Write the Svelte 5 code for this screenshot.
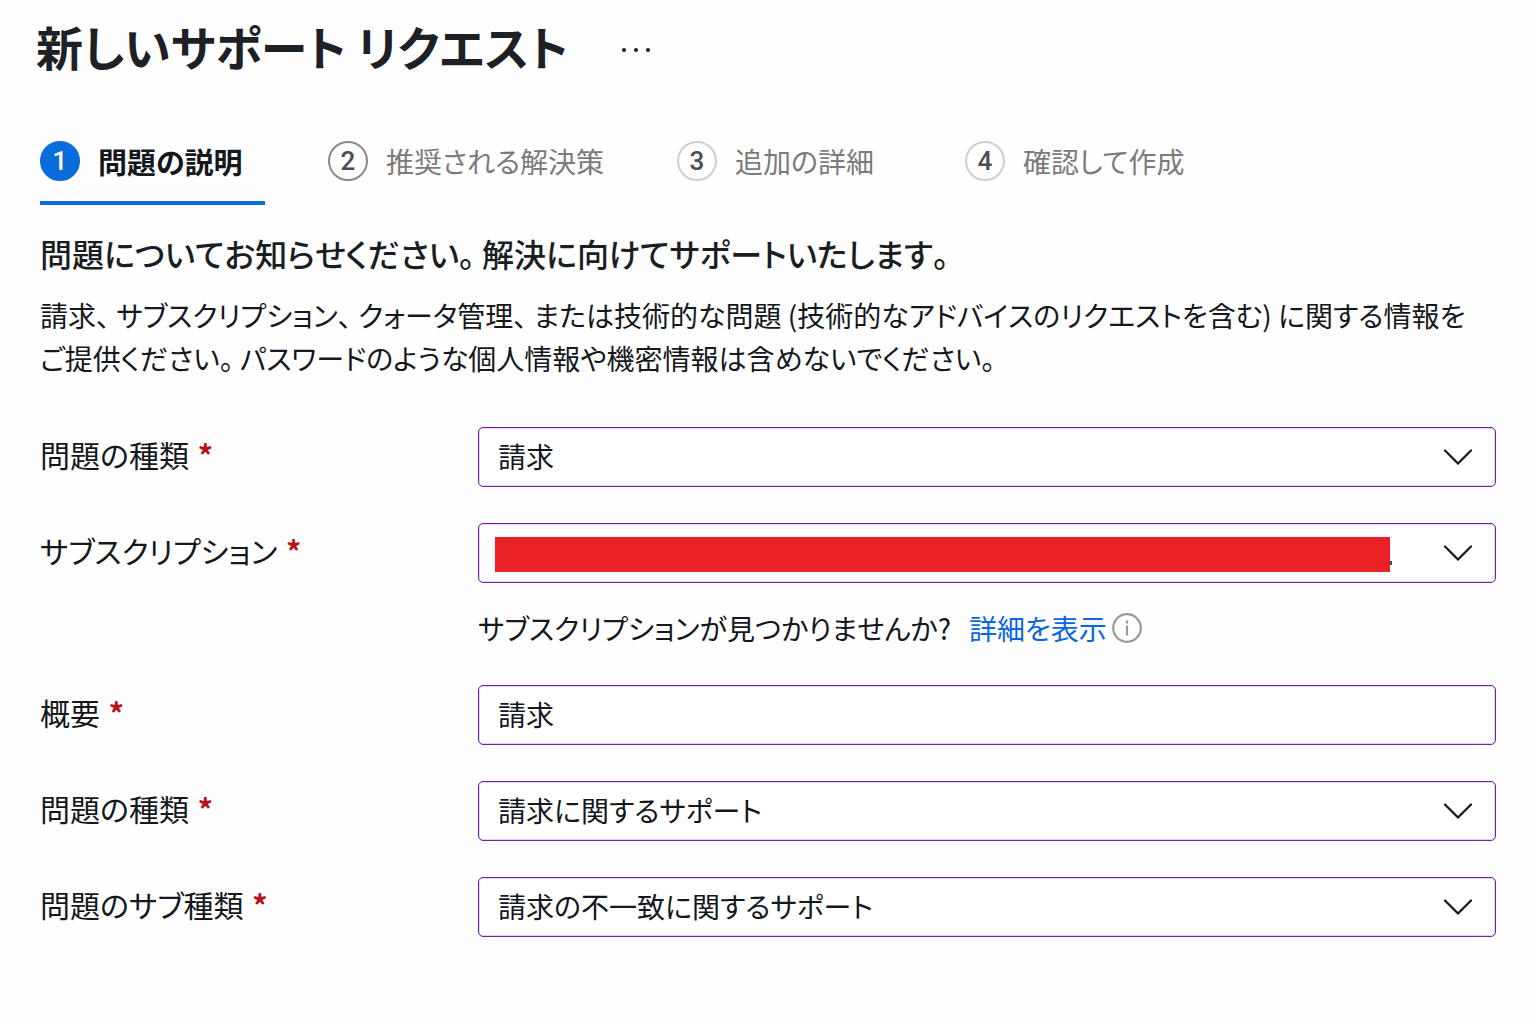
<script>
    let steps = [
        { number: 1, title: "問題の説明" },
        { number: 2, title: "推奨される解決策" },
        { number: 3, title: "追加の詳細" },
        { number: 4, title: "確認して作成" },
    ];

    let currentStep = $state(1);

    let issueType = $state("請求");
    let subscription = $state("");
    let summary = $state("請求");
    let problemType = $state("請求に関するサポート");
    let problemSubtype = $state("請求の不一致に関するサポート");
</script>

{#snippet chevron()}
    <svg class="chevron" viewBox="0 0 28 16" aria-hidden="true">
        <path d="M1 1.5 14 14.5 27 1.5" />
    </svg>
{/snippet}

<main>
    <header>
        <h1>新しいサポート リクエスト</h1>
        <button class="more" aria-label="その他">
            <svg viewBox="0 0 28 4" aria-hidden="true">
                <circle cx="2" cy="2" r="2" />
                <circle cx="14" cy="2" r="2" />
                <circle cx="26" cy="2" r="2" />
            </svg>
        </button>
    </header>

    <nav>
        {#each steps as step}
            <button
                class="step step-{step.number}"
                class:active={currentStep === step.number}
                onclick={() => (currentStep = step.number)}
            >
                <span class="number">{step.number}</span>
                <span>{step.title}</span>
            </button>
        {/each}
    </nav>

    <h2>問題についてお知らせください。 解決に向けてサポートいたします。</h2>
    <p class="intro">
        請求、 サブスクリプション、 クォータ管理、 または技術的な問題 (技術的なアドバイスのリクエストを含む) に関する情報をご提供ください。 パスワードのような個人情報や機密情報は含めないでください。
    </p>

    <form>
        <div class="row">
            <label for="issue-type">問題の種類 <span class="required">*</span></label>
            <div class="field">
                <select id="issue-type" bind:value={issueType}>
                    <option>請求</option>
                </select>
                {@render chevron()}
            </div>
        </div>

        <div class="row">
            <label for="subscription">サブスクリプション <span class="required">*</span></label>
            <div class="field">
                <select id="subscription" bind:value={subscription}>
                    <option value=""></option>
                </select>
                <div class="redacted"></div>
                {@render chevron()}
            </div>
            <p class="hint">
                <span>サブスクリプションが見つかりませんか?</span>
                <a href="#subscription">詳細を表示</a>
                <svg class="info" viewBox="0 0 30 30" aria-hidden="true">
                    <circle cx="15" cy="15" r="13.8" />
                    <path d="M15 12.5v10" />
                    <path d="M15 7.5v3" />
                </svg>
            </p>
        </div>

        <div class="row">
            <label for="summary">概要 <span class="required">*</span></label>
            <div class="field">
                <input id="summary" type="text" bind:value={summary} />
            </div>
        </div>

        <div class="row">
            <label for="problem-type">問題の種類 <span class="required">*</span></label>
            <div class="field">
                <select id="problem-type" bind:value={problemType}>
                    <option>請求に関するサポート</option>
                </select>
                {@render chevron()}
            </div>
        </div>

        <div class="row">
            <label for="problem-subtype">問題のサブ種類 <span class="required">*</span></label>
            <div class="field">
                <select id="problem-subtype" bind:value={problemSubtype}>
                    <option>請求の不一致に関するサポート</option>
                </select>
                {@render chevron()}
            </div>
        </div>
    </form>
</main>

<style>
    :global(body) {
        margin: 0;
        background: #fefefe;
    }

    main {
        padding: 12px 40px 40px;
        color: #14171c;
        font-family: "Noto Sans CJK JP", sans-serif;
        font-size: 28px;
        font-feature-settings: "palt";
        font-kerning: none;
    }

    button, input, select {
        font: inherit;
        font-feature-settings: inherit;
        font-kerning: inherit;
        color: inherit;
    }

    button {
        padding: 0;
        border: none;
        background: none;
        cursor: pointer;
    }

    header {
        display: flex;
        align-items: center;
        gap: 54px;
        margin-left: -4px;
    }

    h1 {
        margin: 0;
        font-size: 47px;
        line-height: 68px;
        font-weight: 600;
        color: #1d2126;
    }

    .more svg {
        display: block;
        width: 28px;
        height: 4px;
        margin-top: 8px;
        fill: #1d2126;
    }

    nav {
        display: grid;
        grid-template-columns: 288px 349px 288px auto;
        justify-content: start;
        margin-top: 60px;
    }

    .step {
        display: flex;
        align-items: center;
        justify-self: start;
        gap: 18px;
        height: 65px;
        padding-bottom: 20px;
        box-sizing: border-box;
        border-bottom: 4px solid transparent;
        line-height: 38px;
        color: #7b7b7b;
    }

    .step.active {
        padding-right: 22px;
        border-bottom-color: #0a6cdb;
        font-size: 29px;
        font-weight: 600;
        color: #14171c;
    }

    .number {
        display: flex;
        align-items: center;
        justify-content: center;
        width: 40px;
        height: 40px;
        box-sizing: border-box;
        border: 2px solid #cfcfcf;
        border-radius: 50%;
        font-family: Roboto, sans-serif;
        font-size: 26px;
        font-weight: 500;
        line-height: 36px;
        color: #4a4d51;
    }

    .step-2 .number {
        border-color: #8a8a8a;
    }

    .active .number {
        border-color: #0a6cdb;
        background: #0a6cdb;
        color: #fff;
    }

    h2 {
        margin: 26px 0 0;
        font-size: 32px;
        line-height: 44px;
        font-weight: 500;
        color: #1a1d22;
    }

    .intro {
        margin: 19px 0 47px;
        padding-right: 20px;
        line-height: 43px;
    }

    form {
        display: grid;
        gap: 36px;
    }

    .row {
        display: grid;
        grid-template-columns: 438px 1fr;
    }

    label {
        font-size: 30px;
        line-height: 54px;
    }

    .required {
        margin-left: 2px;
        font-weight: 600;
        color: #b5121b;
    }

    .field {
        position: relative;
    }

    select, input {
        display: block;
        width: 100%;
        height: 60px;
        padding: 0 80px 2px 19px;
        box-sizing: border-box;
        border: 1px solid #7420a6;
        border-radius: 5px;
        background: #fff;
        box-shadow: inset 0 0 0 1px #e4d3ee;
        appearance: none;
        outline: none;
    }

    select:focus, input:focus {
        border-color: #0a6cdb;
    }

    .chevron {
        position: absolute;
        top: 22px;
        right: 24px;
        width: 28px;
        height: 16px;
        fill: none;
        stroke: #14171c;
        stroke-width: 2.2;
        stroke-linecap: round;
        pointer-events: none;
    }

    /* covers the subscription name */
    .redacted {
        position: absolute;
        top: 14px;
        left: 17px;
        right: 106px;
        height: 35px;
        background: #eb2128;
        pointer-events: none;
    }

    .redacted::after {
        content: "";
        position: absolute;
        right: -2px;
        bottom: 7px;
        width: 2px;
        height: 4px;
        background: #4a4d51;
    }

    .hint {
        grid-column: 2;
        display: flex;
        align-items: center;
        margin: 25px 0 1px;
        line-height: 40px;
    }

    .hint a {
        margin-left: 18px;
        color: #0a66e0;
        text-decoration: none;
    }

    .info {
        width: 30px;
        height: 30px;
        margin-left: 5px;
        fill: none;
        stroke: #999;
        stroke-width: 2.2;
    }
</style>
